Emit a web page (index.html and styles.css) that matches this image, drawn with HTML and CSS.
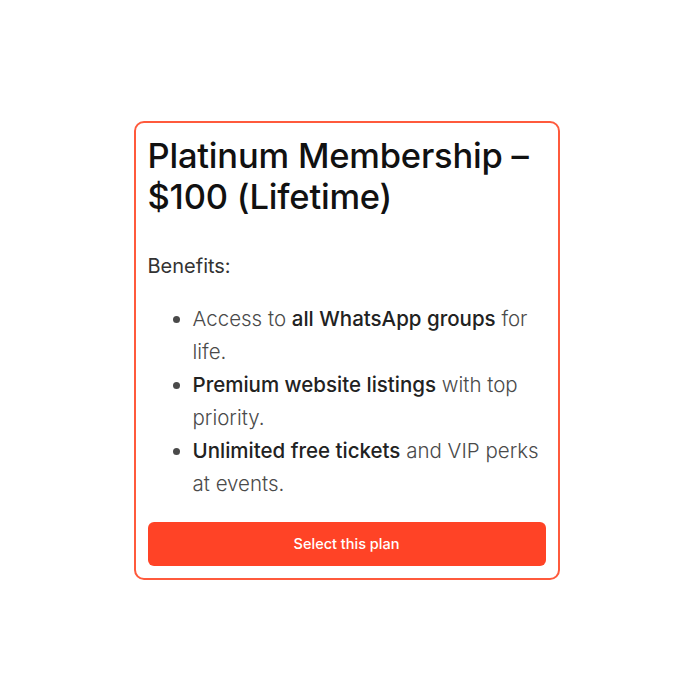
FILE: index.html
```html
<!DOCTYPE html>
<html>
<head>
<meta charset="utf-8">
<link rel="stylesheet" href="styles.css">
</head>
<body>
<div class="page">
  <div class="card">
    <h2 class="title">Platinum Membership – $100 (Lifetime)</h2>
    <p class="label">Benefits:</p>
    <ul class="benefits">
      <li>Access to <strong>all WhatsApp groups</strong> for life.</li>
      <li><strong>Premium website listings</strong> with top priority.</li>
      <li><strong>Unlimited free tickets</strong> and VIP perks at events.</li>
    </ul>
    <button class="cta">Select this plan</button>
  </div>
</div>
</body>
</html>
```

FILE: styles.css
```css
html, body {
  margin: 0;
  padding: 0;
  background: #ffffff;
}
.page {
  width: 700px;
  height: 700px;
  box-sizing: border-box;
  padding-right: 7px;
  display: flex;
  align-items: center;
  justify-content: center;
  font-family: "Inter", "Lato", sans-serif;
}
.card {
  box-sizing: border-box;
  width: 426px;
  border: 2px solid #ff5a3c;
  border-radius: 10px;
  padding: 12px;
  background: #fff;
}
.title {
  margin: 0;
  font-size: 34.5px;
  line-height: 41px;
  font-weight: 500;
  color: #111;
  letter-spacing: -0.2px;
}
.label {
  margin: 35px 0 0 0;
  font-size: 20px;
  line-height: 28px;
  font-weight: 400;
  color: #333;
}
.benefits {
  margin: 22px 0 0 0;
  padding-left: 45px;
  font-size: 20.5px;
  line-height: 33px;
  font-weight: 300;
  color: #4a4a4a;
}
.benefits strong {
  font-weight: 500;
  color: #222;
}
.cta {
  display: block;
  width: 100%;
  height: 44px;
  margin-top: 22px;
  border: none;
  border-radius: 6px;
  background: #ff4326;
  color: #fff;
  font-family: "Inter", sans-serif;
  font-size: 14.5px;
  font-weight: 500;
}
```
